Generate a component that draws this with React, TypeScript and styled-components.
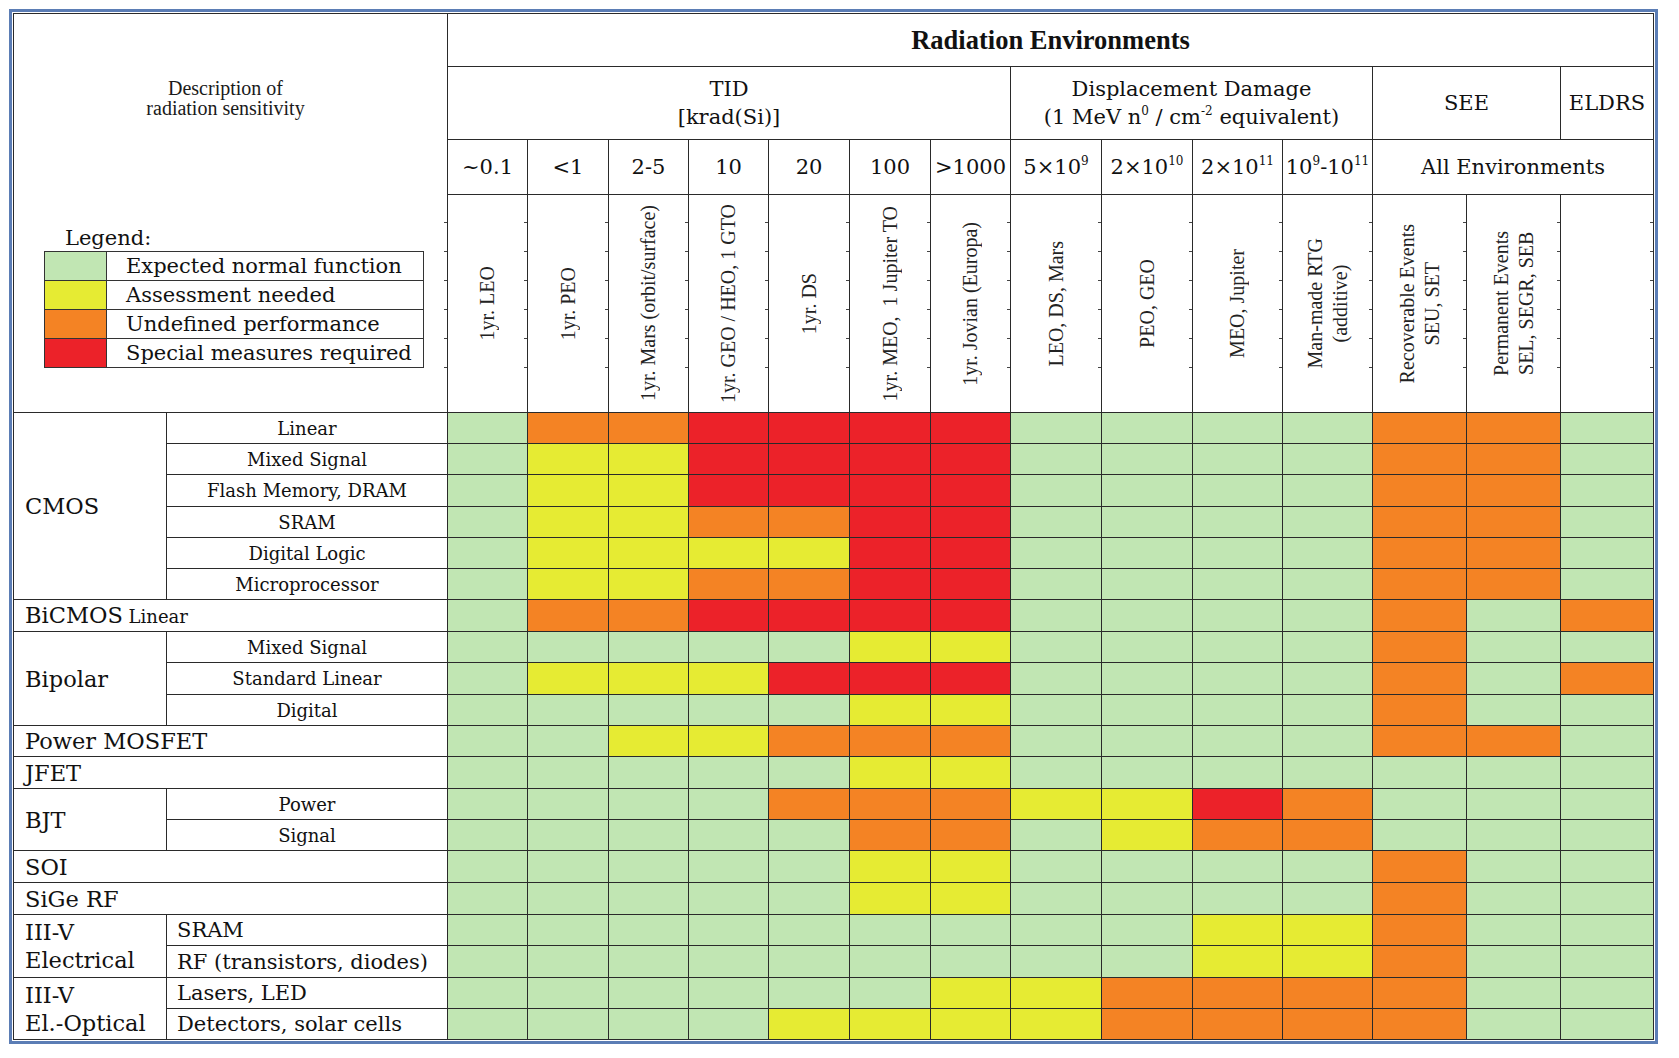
import React from "react";
import styled, { createGlobalStyle } from "styled-components";

const WIDE = `"DejaVu Serif", "Liberation Serif", serif`;
const TIMES = `"Liberation Serif", "Times New Roman", serif`;

const GlobalStyle = createGlobalStyle`
  html, body { margin: 0; padding: 0; background: #ffffff; }
  body { font-family: ${TIMES}; color: #111; }
`;

const COL_LINES = [13, 166, 447, 527, 608, 688, 768, 849, 930, 1010, 1101, 1192, 1282, 1372, 1466, 1560, 1653];
const ROW_LINES = [13, 66, 139, 194, 412, 443, 474, 506, 537, 568, 599, 631, 662, 694, 725, 756, 788, 819, 850, 882, 914, 945, 977, 1008, 1039];

const tracks = (lines: number[]) =>
  lines
    .slice(1)
    .map((v, i) => `${v - lines[i] - 1}px`)
    .join(" ");

type Level = "G" | "Y" | "O" | "R";
const LEVEL_COLORS: Record<Level, string> = {
  G: "#c1e6b3",
  Y: "#e6eb33",
  O: "#f48324",
  R: "#ec2229",
};

const TICKS_ROT = [27, 56, 85, 114, 143, 172];
const TICKS_DESC = [208, 237, 266, 295, 324, 353];
const tickCss = (offs: number[]) => `
  background-image: ${offs.map(() => "linear-gradient(#444, #444)").join(", ")};
  background-size: 3px 1px;
  background-repeat: no-repeat;
  background-position: ${offs.map((o) => `right 0 top ${o}px`).join(", ")};
`;

const Frame = styled.div`
  margin: 9px;
  width: max-content;
  border: 3px solid #5b7db5;
  padding: 1px;
  background: #fff;
`;

const Grid = styled.div`
  display: grid;
  grid-template-columns: ${tracks(COL_LINES)};
  grid-template-rows: ${tracks(ROW_LINES)};
  gap: 1px;
  padding: 1px;
  background: #2a2a2a;
`;

const Cell = styled.div<{ $col: string; $row: string }>`
  grid-column: ${(p) => p.$col};
  grid-row: ${(p) => p.$row};
  background: #fff;
  display: flex;
  align-items: center;
  justify-content: center;
  min-width: 0;
  min-height: 0;
  white-space: nowrap;
`;

const DescCell = styled(Cell)`
  display: block;
  ${tickCss(TICKS_DESC)}
`;

const Description = styled.div`
  margin-top: 64px;
  padding-right: 10px;
  font-family: ${TIMES};
  font-size: 20px;
  line-height: 20px;
  text-align: center;
  color: #1a1a1a;
`;

const LegendTitle = styled.div`
  margin: 108px 0 0 51px;
  font-family: ${WIDE};
  font-size: 21px;
  line-height: 24px;
  color: #111;
`;

const LegendBox = styled.div`
  margin: 1px 0 0 30px;
  width: 378px;
  display: grid;
  grid-template-columns: 61px 1fr;
  grid-auto-rows: 28px;
  gap: 1px;
  padding: 1px;
  background: #333;
`;

const Swatch = styled.div<{ $level: Level }>`
  background: ${(p) => LEVEL_COLORS[p.$level]};
`;

const LegendText = styled.div`
  background: #fff;
  display: flex;
  align-items: center;
  padding-left: 19px;
  font-family: ${WIDE};
  font-size: 21px;
  color: #111;
  white-space: nowrap;
`;

const TitleCell = styled(Cell)`
  font-family: ${TIMES};
  font-weight: bold;
  font-size: 26.5px;
  color: #111;
`;

const HeadCell = styled(Cell)`
  flex-direction: column;
  font-family: ${WIDE};
  font-size: 21px;
  line-height: 28px;
  color: #111;
  text-align: center;
`;

const ValueCell = styled(Cell)`
  font-family: ${WIDE};
  font-size: 21px;
  color: #111;
`;

const Sup = styled.sup`
  font-size: 12px;
  vertical-align: 9px;
  line-height: 0;
`;

const RotCell = styled(Cell)`
  ${tickCss(TICKS_ROT)}
`;

const RotText = styled.div`
  writing-mode: vertical-rl;
  transform: rotate(180deg);
  text-align: center;
  font-family: ${TIMES};
  font-size: 20px;
  line-height: 25px;
  color: #222;
`;

const GroupCell = styled(Cell)`
  flex-direction: column;
  align-items: flex-start;
  padding-left: 11px;
  font-family: ${WIDE};
  font-size: 22.5px;
  line-height: 28px;
  color: #111;
`;

const SmallWord = styled.span`
  font-size: 18px;
`;

const SubCell = styled(Cell)<{ $left?: boolean }>`
  justify-content: ${(p) => (p.$left ? "flex-start" : "center")};
  padding-left: ${(p) => (p.$left ? "10px" : "0")};
  font-family: ${WIDE};
  font-size: ${(p) => (p.$left ? "21px" : "18px")};
  color: #111;
`;

const DataCell = styled(Cell)<{ $level: Level }>`
  background: ${(p) => LEVEL_COLORS[p.$level]};
`;

const LEGEND: [Level, string][] = [
  ["G", "Expected normal function"],
  ["Y", "Assessment needed"],
  ["O", "Undefined performance"],
  ["R", "Special measures required"],
];

const VALUES: React.ReactNode[] = [
  "~0.1",
  "<1",
  "2-5",
  "10",
  "20",
  "100",
  ">1000",
  <>5×10<Sup>9</Sup></>,
  <>2×10<Sup>10</Sup></>,
  <>2×10<Sup>11</Sup></>,
  <>10<Sup>9</Sup>-10<Sup>11</Sup></>,
];

const ROT: string[][] = [
  ["1yr. LEO"],
  ["1yr. PEO"],
  ["1yr. Mars (orbit/surface)"],
  ["1yr. GEO / HEO, 1 GTO"],
  ["1yr. DS"],
  ["1yr. MEO,\u00a0 1 Jupiter TO"],
  ["1yr. Jovian (Europa)"],
  ["LEO, DS, Mars"],
  ["PEO, GEO"],
  ["MEO, Jupiter"],
  ["Man-made RTG", "(additive)"],
  ["Recoverable Events", "SEU, SET"],
  ["Permanent Events", "SEL, SEGR, SEB"],
  [],
];

const ROWS: string[] = [
  "GOORRRRGGGGOOG",
  "GYYRRRRGGGGOOG",
  "GYYRRRRGGGGOOG",
  "GYYOORRGGGGOOG",
  "GYYYYRRGGGGOOG",
  "GYYOORRGGGGOOG",
  "GOORRRRGGGGOGO",
  "GGGGGYYGGGGOGG",
  "GYYYRRRGGGGOGO",
  "GGGGGYYGGGGOGG",
  "GGYYOOOGGGGOOG",
  "GGGGGYYGGGGGGG",
  "GGGGOOOYYROGGG",
  "GGGGGOOGYOOGGG",
  "GGGGGYYGGGGOGG",
  "GGGGGYYGGGGOGG",
  "GGGGGGGGGYYOGG",
  "GGGGGGGGGYYOGG",
  "GGGGGGYYOOOOGG",
  "GGGGYYYYOOOOGG",
];

type Group = {
  name: string[];
  small?: string;
  subs?: string[];
  left?: boolean;
};

const GROUPS: Group[] = [
  { name: ["CMOS"], subs: ["Linear", "Mixed Signal", "Flash Memory, DRAM", "SRAM", "Digital Logic", "Microprocessor"] },
  { name: ["BiCMOS"], small: "Linear" },
  { name: ["Bipolar"], subs: ["Mixed Signal", "Standard Linear", "Digital"] },
  { name: ["Power MOSFET"] },
  { name: ["JFET"] },
  { name: ["BJT"], subs: ["Power", "Signal"] },
  { name: ["SOI"] },
  { name: ["SiGe RF"] },
  { name: ["III-V", "Electrical"], subs: ["SRAM", "RF (transistors, diodes)"], left: true },
  { name: ["III-V", "El.-Optical"], subs: ["Lasers, LED", "Detectors, solar cells"], left: true },
];

function RowLabels() {
  const out: React.ReactNode[] = [];
  let r = 0;
  GROUPS.forEach((g, gi) => {
    const start = 5 + r;
    if (g.subs) {
      out.push(
        <GroupCell key={`g${gi}`} $col="1 / 2" $row={`${start} / ${start + g.subs.length}`}>
          {g.name.map((n) => (
            <div key={n}>{n}</div>
          ))}
        </GroupCell>
      );
      g.subs.forEach((s, si) => {
        out.push(
          <SubCell key={`s${gi}-${si}`} $col="2 / 3" $row={`${start + si}`} $left={g.left}>
            {s}
          </SubCell>
        );
      });
      r += g.subs.length;
    } else {
      out.push(
        <GroupCell key={`g${gi}`} $col="1 / 3" $row={`${start}`}>
          <div>
            {g.name[0]}
            {g.small && <SmallWord> {g.small}</SmallWord>}
          </div>
        </GroupCell>
      );
      r += 1;
    }
  });
  return <>{out}</>;
}

export default function App() {
  return (
    <>
      <GlobalStyle />
      <Frame>
        <Grid>
          <DescCell $col="1 / 3" $row="1 / 5">
            <Description>
              Description of
              <br />
              radiation sensitivity
            </Description>
            <LegendTitle>Legend:</LegendTitle>
            <LegendBox>
              {LEGEND.map(([lv, text]) => (
                <React.Fragment key={lv}>
                  <Swatch $level={lv} />
                  <LegendText>{text}</LegendText>
                </React.Fragment>
              ))}
            </LegendBox>
          </DescCell>

          <TitleCell $col="3 / 17" $row="1">
            Radiation Environments
          </TitleCell>

          <HeadCell $col="3 / 10" $row="2">
            <div>TID</div>
            <div>[krad(Si)]</div>
          </HeadCell>
          <HeadCell $col="10 / 14" $row="2">
            <div>Displacement Damage</div>
            <div>
              (1 MeV n<Sup>0</Sup> / cm<Sup>-2</Sup> equivalent)
            </div>
          </HeadCell>
          <HeadCell $col="14 / 16" $row="2">
            SEE
          </HeadCell>
          <HeadCell $col="16 / 17" $row="2">
            ELDRS
          </HeadCell>

          {VALUES.map((v, i) => (
            <ValueCell key={`v${i}`} $col={`${i + 3}`} $row="3">
              <span>{v}</span>
            </ValueCell>
          ))}
          <ValueCell $col="14 / 17" $row="3">
            All Environments
          </ValueCell>

          {ROT.map((lines, i) => (
            <RotCell key={`rot${i}`} $col={`${i + 3}`} $row="4">
              {lines.length > 0 && (
                <RotText>
                  {lines.map((l, li) => (
                    <React.Fragment key={li}>
                      {li > 0 && <br />}
                      {l}
                    </React.Fragment>
                  ))}
                </RotText>
              )}
            </RotCell>
          ))}

          <RowLabels />

          {ROWS.map((line, ri) =>
            line.split("").map((ch, ci) => (
              <DataCell key={`d${ri}-${ci}`} $level={ch as Level} $col={`${ci + 3}`} $row={`${ri + 5}`} />
            ))
          )}
        </Grid>
      </Frame>
    </>
  );
}
